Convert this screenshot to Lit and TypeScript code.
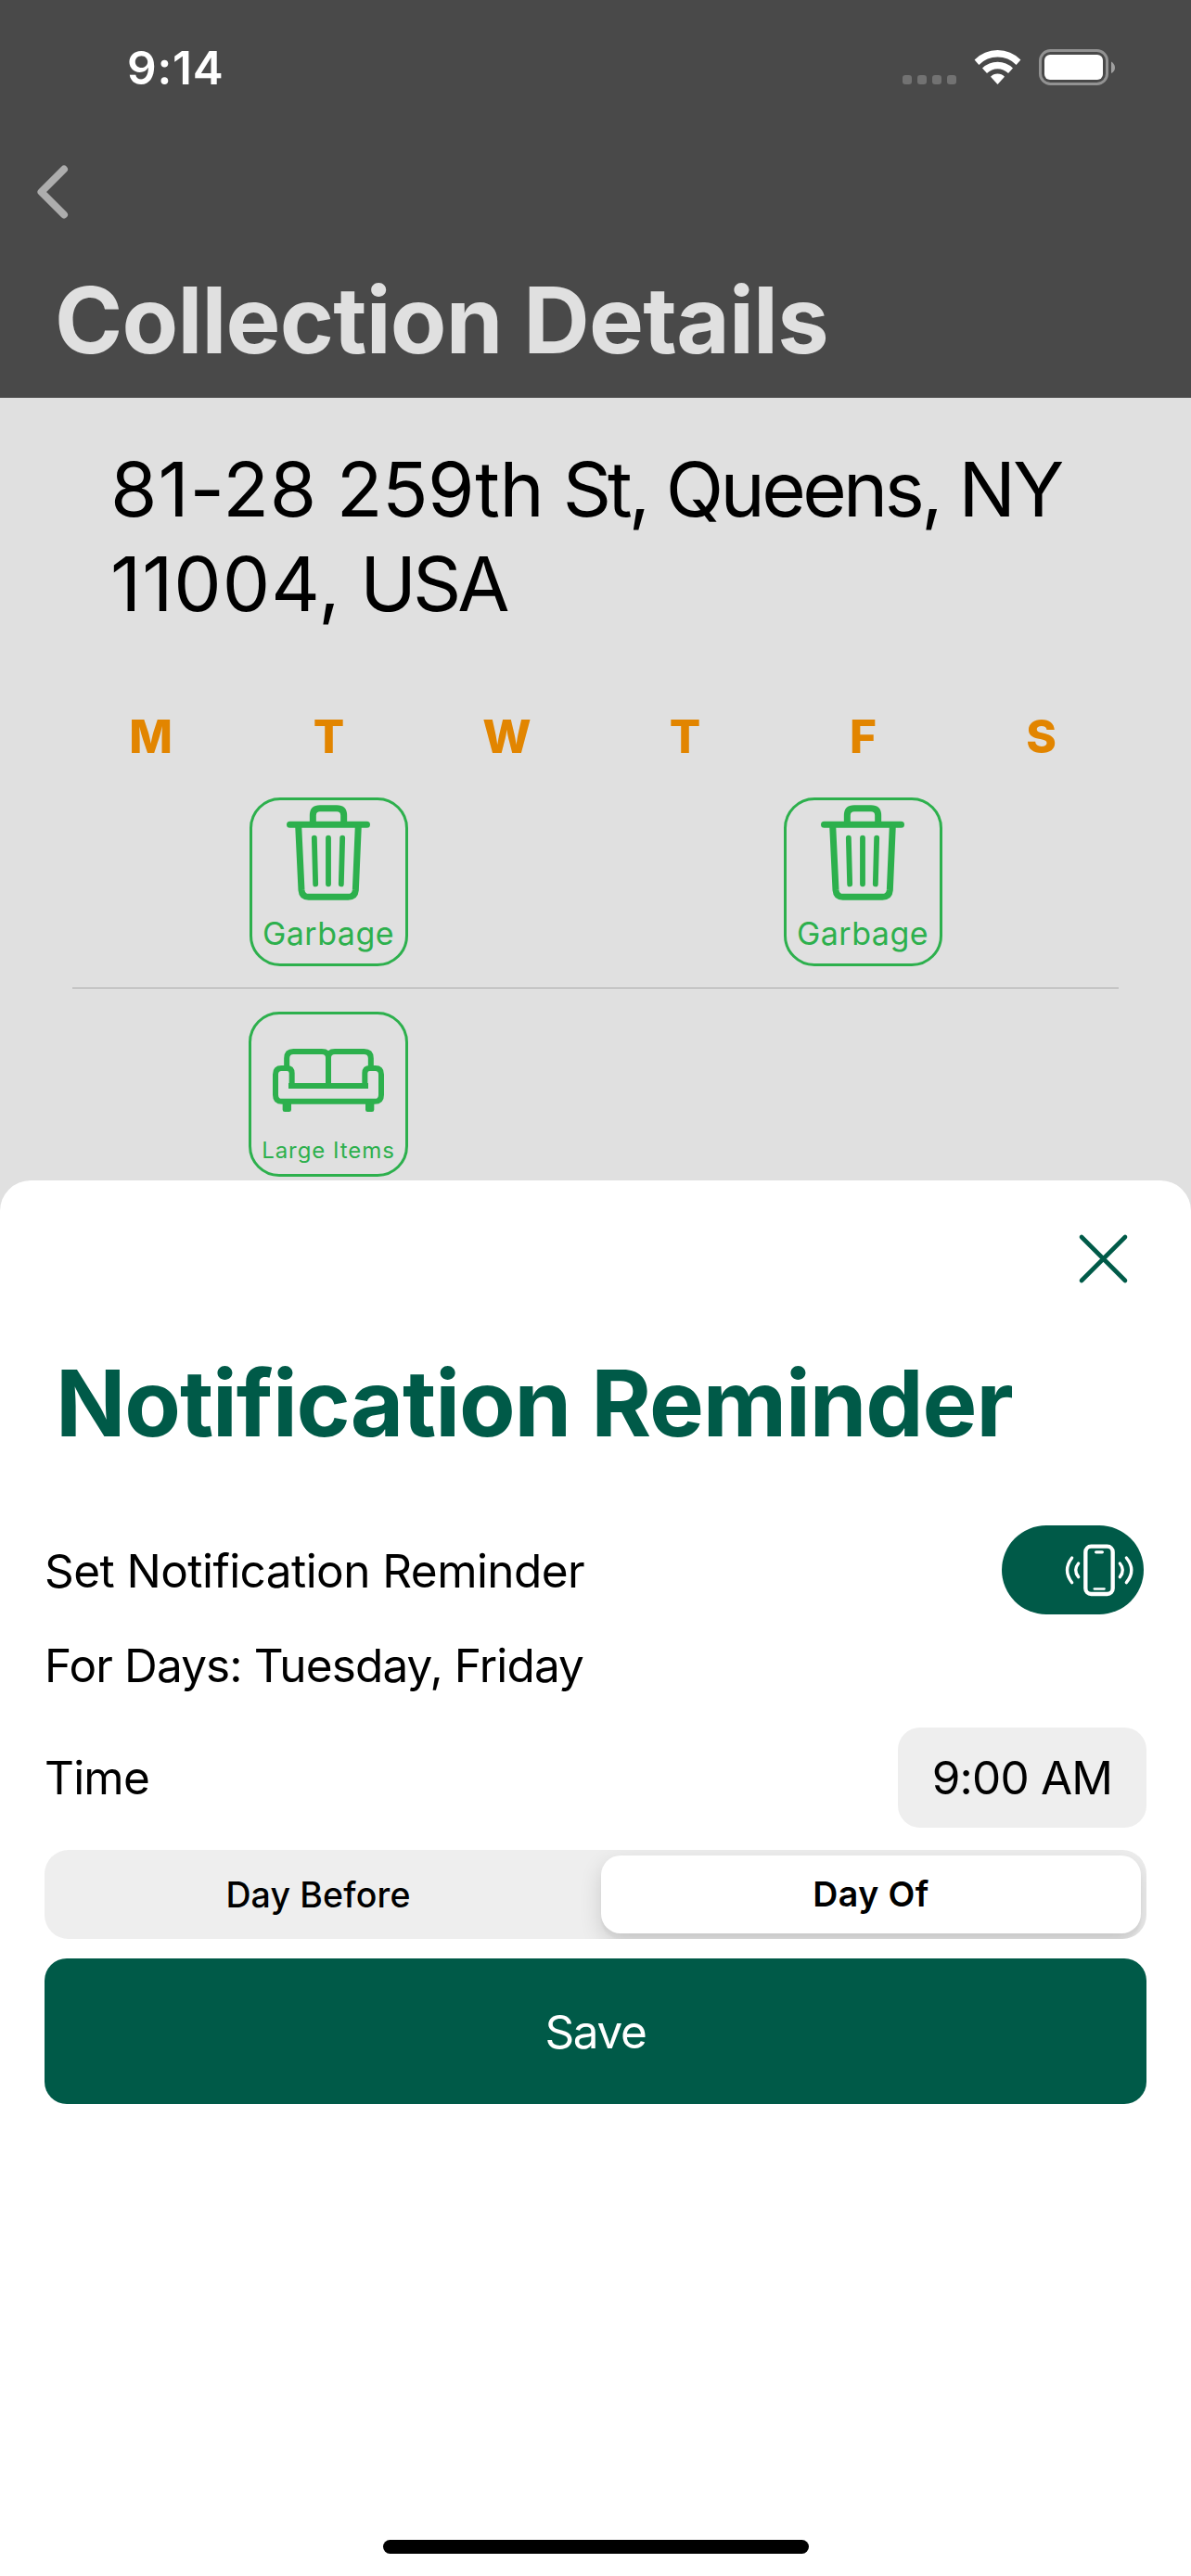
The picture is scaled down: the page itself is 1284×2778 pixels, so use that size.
import { LitElement, html, css } from "lit";
import { customElement } from "lit/decorators.js";
import { styleMap } from "lit/directives/style-map.js";

const trash = html`<svg class="trash" viewBox="177 84 270 309" fill="none" stroke="currentColor" stroke-linecap="round">
  <path d="M187.500 148H436.500" stroke-width="21"/>
  <path d="M262 146V118Q262 95 285 95H339Q362 95 362 118V146" stroke-width="21" stroke-linecap="butt"/>
  <path d="M215 150L225 360Q227 382 248 382H376Q398 382 400 360L409 150" stroke-width="21" stroke-linecap="butt"/>
  <path d="M266.500 191L270.500 340M312 191V340M357.500 191L353.500 340" stroke-width="17.500"/>
</svg>`;

const sofa = html`<svg class="sofa" viewBox="132 243 360 204" fill="none" stroke="currentColor" stroke-width="18">
  <path d="M177.500 304V274Q177.500 252 199 252H291Q312 252 312 272V354M312 272Q312 252 333 252H427Q449.500 252 449.500 274V304"/>
  <path d="M183 363H441"/>
  <path d="M194 366V322Q194 306 178 306H160Q141 306 141 326V392Q141 413.500 162 413.500H462Q483 413.500 483 392V326Q483 306 464 306H446Q430 306 430 322V366"/>
  <path d="M164 420H192V440Q192 447 185 447H171Q164 447 164 440ZM432 420H460V440Q460 447 453 447H439Q432 447 432 440Z" fill="currentColor" stroke="none"/>
</svg>`;

// Each word of the address with its tracking in px.
const address: [string, number][][] = [
  [["81-28", 0.9], ["259th", -0.5], ["St,", -4], ["Queens,", -3.6], ["NY", -3]],
  [["11004,", 1], ["USA", -4]],
];

@customElement("app-root")
export class AppRoot extends LitElement {
  static styles = css`
    :host { display: flex; flex-direction: column; width: 1284px; height: 2778px; background: #e0e0e0; color: #000;
      font-family: Inter, "Liberation Sans", sans-serif; font-size: 49.500px; overflow: hidden; }
    svg { display: block; flex: none; }
    .header { height: 429px; background: #494949; color: #e0e0e0; }
    .status { height: 146px; display: flex; align-items: center; padding: 0 81px 0 137px; box-sizing: border-box; color: #fff; }
    .clock { font-weight: 600; flex: 1; letter-spacing: 0.8px; }
    .nav { height: 121px; display: flex; align-items: center; padding-left: 39px; }
    h1 { margin: 0; font-size: 99px; font-weight: 700; line-height: 120px; white-space: nowrap; }
    .header h1 { padding: 18px 0 0 59px; letter-spacing: -0.760px; }
    .main { height: 844px; box-sizing: border-box; padding: 48px 66px 0; }
    .address { font-size: 81.600px; line-height: 102px; padding-left: 53px; white-space: nowrap; word-spacing: -2.500px; }
    .week { display: grid; grid-template-columns: repeat(6, 192px); justify-items: center; }
    .days { margin-top: 83px; line-height: 60px; font-weight: 850; color: #e28500; margin-bottom: 36px; padding-left: 0.500px; }
    .card { box-sizing: border-box; border: 3px solid #2db04d; border-radius: 33px; color: #2db04d; display: flex;
      flex-direction: column; align-items: center; white-space: nowrap; }
    .garbage { width: 171px; height: 182px; padding-top: 5px; font-size: 34px; letter-spacing: 0.500px; }
    .large { width: 172px; height: 178px; padding-top: 37px; font-size: 24px; letter-spacing: 0.950px; }
    .trash { width: 90px; height: 103px; }
    .sofa { width: 120px; height: 68px; }
    .garbage span { line-height: 40px; margin-top: 16px; }
    .large span { line-height: 30px; margin-top: 27px; }
    .c2 { grid-column: 2; }
    .c5 { grid-column: 5; }
    .rule { height: 1px; background: #a9a9a9; margin: 23px 12px 25px; }
    .sheet { flex: 1; background: #fff; border-radius: 33px 33px 0 0; display: flex; flex-direction: column; padding: 57px 48px 0; }
    .close { align-self: flex-end; margin-right: 19px; }
    .sheet h1 { color: #005a48; margin: 68px 0 72px 12px; letter-spacing: -1.120px; }
    .row { display: flex; align-items: center; justify-content: space-between; }
    .toggle { width: 153px; height: 96px; border-radius: 48px; background: #005a48; margin: 0 3px 2px 0; }
    .set { height: 98px; letter-spacing: -0.560px; }
    .for { height: 106px; letter-spacing: -0.860px; }
    .time { height: 108px; margin-top: 14px; letter-spacing: -0.800px; }
    .pick { width: 268px; height: 108px; border-radius: 24px; background: #eee; display: flex; align-items: center; justify-content: center; }
    .seg { height: 96px; margin-top: 24px; border-radius: 26px; background: #eee; display: grid; grid-template-columns: 578px 582px; overflow: hidden;
      box-sizing: border-box; padding: 6px; font-size: 37.500px; align-items: center; text-align: center; justify-content: space-between; }
    .off { font-weight: 500; letter-spacing: 0.150px; }
    .on { background: #fff; border-radius: 21px; height: 84px; line-height: 84px; font-weight: 600; letter-spacing: 0.400px;
      box-shadow: 0 9px 24px rgba(0, 0, 0, .14), 0 6px 3px rgba(0, 0, 0, .04); }
    .save { height: 157px; margin-top: 21px; border-radius: 24px; background: #005a48; color: #fff; display: flex; align-items: center;
      justify-content: center; letter-spacing: -1.400px; }
    .home { width: 459px; height: 15px; border-radius: 8px; background: #000; margin: auto auto 24px; }
  `;

  render() {
    return html`
      <div class="header">
        <div class="status"><span class="clock">9:14</span>
          <svg width="230" height="40" viewBox="973 53 230 40">
            <g fill="#727272"><rect x="973" y="81" width="10" height="10" rx="3"/><rect x="989" y="81" width="10" height="10" rx="3"/><rect x="1005" y="81" width="10" height="10" rx="3"/><rect x="1021" y="81" width="10" height="10" rx="3"/></g>
            <g fill="#fff">
              <path d="M1050.600 64.600Q1061 54 1075.500 54T1100.400 64.600L1095.600 69.900Q1087 61.600 1075.500 61.600T1055.400 69.900Z"/>
              <path d="M1059 73.500Q1066 66.700 1075.500 66.700T1092 73.500L1087 79Q1082 74.300 1075.500 74.300T1064 79Z"/>
              <path d="M1068 82.800Q1071 79.600 1075.500 79.600T1083 82.800L1075.500 91Z"/>
            </g>
            <rect x="1121.500" y="54.500" width="72" height="36" rx="11" fill="none" stroke="#929292" stroke-width="3"/>
            <rect x="1126" y="59" width="63" height="27" rx="6" fill="#fff"/>
            <path d="M1198 66.500Q1202 69 1202 73T1198 79Z" fill="#a0a0a0"/>
          </svg></div>
        <div class="nav"><svg width="36" height="60" viewBox="39 176.500 36 60"><path d="M69 182L44.500 206.500L69 231" fill="none" stroke="#adadad" stroke-width="8" stroke-linecap="round" stroke-linejoin="round"/></svg></div>
        <h1>Collection Details</h1>
      </div>
      <div class="main">
        <div class="address">${address.map((line) => html`<div>${line.map(([word, tracking], i) =>
          html`${i ? " " : ""}<span style=${styleMap({ letterSpacing: `${tracking}px` })}>${word}</span>`)}</div>`)}</div>
        <div class="week days">${["M", "T", "W", "T", "F", "S"].map((d) => html`<span>${d}</span>`)}</div>
        <div class="week">
          <div class="card garbage c2">${trash}<span>Garbage</span></div>
          <div class="card garbage c5">${trash}<span>Garbage</span></div>
        </div>
        <div class="rule"></div>
        <div class="week"><div class="card large c2">${sofa}<span>Large Items</span></div></div>
      </div>
      <div class="sheet">
        <svg class="close" width="55" height="55" viewBox="0 0 55 55"><path d="M4 4L51 51M51 4L4 51" stroke="#005a48" stroke-width="4.600" stroke-linecap="round"/></svg>
        <h1>Notification Reminder</h1>
        <div class="row set"><span>Set Notification Reminder</span>
          <svg class="toggle" viewBox="60 74 459 288" fill="none" stroke="#fff" stroke-linecap="round">
            <rect x="331" y="142" width="88" height="154" rx="18" stroke-width="13"/>
            <path d="M365 160.500H385" stroke-width="10"/><path d="M359 279.500H392" stroke-width="7"/>
            <path d="M287 179Q256 219 287 259M463 179Q496 219 463 259M308 197Q290 219 308 241M442 197Q460 219 442 241" stroke-width="10"/>
          </svg></div>
        <div class="row for"><span>For Days: Tuesday, Friday</span></div>
        <div class="row time"><span>Time</span><div class="pick">9:00 AM</div></div>
        <div class="seg"><span class="off">Day Before</span><span class="on">Day Of</span></div>
        <div class="save">Save</div>
        <div class="home"></div>
      </div>`;
  }
}
